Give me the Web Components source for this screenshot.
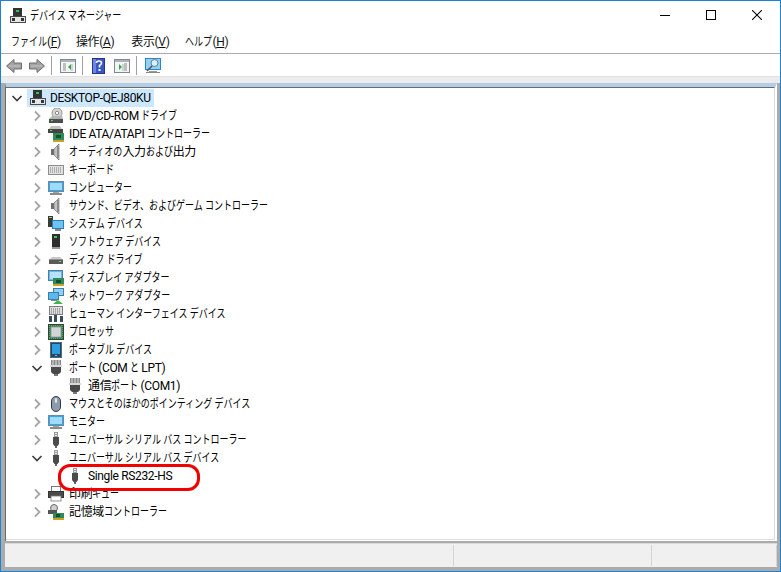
<!DOCTYPE html>
<html lang="ja">
<head>
<meta charset="utf-8">
<title>デバイス マネージャー</title>
<style>
  html, body { margin: 0; padding: 0; background: #fff; }
  body { font: 12px/16px Roboto, "Noto Sans CJK JP", sans-serif; letter-spacing: -0.35px; color: #000; }
</style>
</head>
<body>
<dm-window>
  <dm-titlebar slot="title"><dm-icon name="root"></dm-icon><jp-text>デバイス マネージャー</jp-text></dm-titlebar>
  <dm-menubar slot="menu">
    <dm-menu><jp-text>ファイル</jp-text>(<u>F</u>)</dm-menu>
    <dm-menu style="margin-left:15px">操作(<u>A</u>)</dm-menu>
    <dm-menu style="margin-left:17px">表示(<u>V</u>)</dm-menu>
    <dm-menu style="margin-left:16px"><jp-text>ヘルプ</jp-text>(<u>H</u>)</dm-menu>
  </dm-menubar>
  <dm-toolbar slot="toolbar"></dm-toolbar>
  <dm-tree slot="tree">
    <dm-item level="0" state="open" icon="root" selected>DESKTOP-QEJ80KU</dm-item>
    <dm-item level="1" state="closed" icon="dvd">DVD/CD-ROM ドライブ</dm-item>
    <dm-item level="1" state="closed" icon="ide">IDE ATA/ATAPI コントローラー</dm-item>
    <dm-item level="1" state="closed" icon="speaker">オーディオの入力および出力</dm-item>
    <dm-item level="1" state="closed" icon="keyboard">キーボード</dm-item>
    <dm-item level="1" state="closed" icon="monitor">コンピューター</dm-item>
    <dm-item level="1" state="closed" icon="speaker">サウンド、ビデオ、およびゲーム コントローラー</dm-item>
    <dm-item level="1" state="closed" icon="system">システム デバイス</dm-item>
    <dm-item level="1" state="closed" icon="software">ソフトウェア デバイス</dm-item>
    <dm-item level="1" state="closed" icon="disk">ディスク ドライブ</dm-item>
    <dm-item level="1" state="closed" icon="display">ディスプレイ アダプター</dm-item>
    <dm-item level="1" state="closed" icon="network">ネットワーク アダプター</dm-item>
    <dm-item level="1" state="closed" icon="hid">ヒューマン インターフェイス デバイス</dm-item>
    <dm-item level="1" state="closed" icon="cpu">プロセッサ</dm-item>
    <dm-item level="1" state="closed" icon="portable">ポータブル デバイス</dm-item>
    <dm-item level="1" state="open" icon="port">ポート (COM と LPT)</dm-item>
    <dm-item level="2" icon="port">通信ポート (COM1)</dm-item>
    <dm-item level="1" state="closed" icon="mouse">マウスとそのほかのポインティング デバイス</dm-item>
    <dm-item level="1" state="closed" icon="monitor">モニター</dm-item>
    <dm-item level="1" state="closed" icon="usb">ユニバーサル シリアル バス コントローラー</dm-item>
    <dm-item level="1" state="open" icon="usb">ユニバーサル シリアル バス デバイス</dm-item>
    <dm-item level="2" icon="usb">Single RS232-HS</dm-item>
    <dm-item level="1" state="closed" icon="printer">印刷キュー</dm-item>
    <dm-item level="1" state="closed" icon="storage">記憶域コントローラー</dm-item>
    <dm-callout></dm-callout>
  </dm-tree>
  <dm-statusbar slot="status"></dm-statusbar>
</dm-window>

<script>
const ICONS = {
  root: `<rect x="3" y="0" width="9" height="8" fill="#333"/><rect x="6" y="2" width="3" height="2" fill="#35c24a"/>
    <rect x="0.5" y="8.5" width="15" height="6" fill="#e6e6e6" stroke="#4a4a4a"/>
    <rect x="2" y="10" width="3" height="3" fill="#333"/><rect x="11" y="10" width="3" height="3" fill="#333"/>`,
  dvd: `<circle cx="9" cy="5" r="5" fill="#d4d4d4" stroke="#9a9a9a"/><circle cx="9" cy="5" r="1.7" fill="#fff" stroke="#888"/>
    <path d="M1 11 L4 8 H14 L15 11 Z" fill="#b5b5b5"/><rect x="1" y="11" width="14" height="4" fill="#4d4d4d"/><rect x="3" y="12" width="2" height="1" fill="#5be05b"/>`,
  ide: `<path d="M1 3 L3 0 H12 L14 3 Z" fill="#c4c4c4"/><rect x="0" y="3" width="15" height="4" fill="#444"/><rect x="2" y="4" width="2" height="1" fill="#6fe06f"/>
    <rect x="5" y="7" width="11" height="8" fill="#2f8a57"/><rect x="5" y="14" width="11" height="2" fill="#c9a227"/><rect x="8" y="9" width="5" height="3" fill="#174d30"/>`,
  speaker: `<rect x="3" y="5" width="3" height="6" fill="#6f6f6f"/><path d="M6 5 L11 0 V16 L6 11 Z" fill="#c4c4c4" stroke="#7a7a7a" stroke-width=".7"/><rect x="9" y="2" width="2" height="12" fill="#8c8c8c"/>`,
  keyboard: `<rect x="0.5" y="3.5" width="15" height="9" fill="#e2e2e2" stroke="#8c8c8c"/>
    <path d="M2 6h12M2 8h12M2 10h12" stroke="#7d7d7d" stroke-dasharray="1 1"/>`,
  monitor: `<rect x="0.5" y="1.5" width="15" height="10" fill="#36a5ea" stroke="#6e8aa0"/><rect x="2" y="3" width="12" height="7" fill="#9fdcfa"/>
    <rect x="5" y="12" width="6" height="1" fill="#a5a5a5"/><rect x="2" y="13" width="12" height="2" fill="#8c8c8c"/>`,
  system: `<rect x="0" y="0" width="5" height="11" fill="#3a3a3a"/><rect x="1" y="1" width="3" height="1" fill="#7fd67f"/>
    <rect x="4.5" y="4.5" width="11" height="8" fill="#6bc4f2" stroke="#2a7fb5"/><rect x="7" y="13" width="6" height="2" fill="#888"/>`,
  software: `<rect x="4" y="0" width="8" height="13" fill="#2f2f2f"/><rect x="6" y="2" width="3" height="2" fill="#48c45a"/>
    <rect x="4" y="13" width="8" height="2" fill="#9a9a9a"/>`,
  disk: `<path d="M2 7 L4 5 H12 L14 7 Z" fill="#c9c9c9"/><rect x="1" y="7" width="14" height="5" fill="#5b5b5b"/><rect x="1" y="7" width="14" height="1" fill="#8e8e8e"/><rect x="11" y="9" width="2" height="1" fill="#5be05b"/>`,
  display: `<rect x="0.5" y="0.5" width="14" height="10" fill="#63b8ec" stroke="#4f7d9c"/><rect x="2" y="2" width="11" height="7" fill="#b6e3fb"/>
    <rect x="5" y="8" width="11" height="7" fill="#2f8a57"/><rect x="8" y="10" width="5" height="3" fill="#174d30"/><rect x="5" y="14" width="11" height="2" fill="#c9a227"/>`,
  network: `<rect x="5.5" y="0.5" width="10" height="7" fill="#8fd2f7" stroke="#3b7ea8"/><rect x="0.5" y="4.5" width="10" height="7" fill="#5cb8ee" stroke="#3b7ea8"/>
    <rect x="3" y="12" width="6" height="1" fill="#888"/><path d="M5 16 L10 12 L15 16 Z" fill="#42b549"/>`,
  hid: `<rect x="1.5" y="0.5" width="13" height="8" fill="#dedede" stroke="#7d7d7d"/><path d="M3 3h10M3 5h10M3 7h10" stroke="#6e6e6e" stroke-dasharray="1 1"/>
    <path d="M1 16 V10 H4 V16Z M6 16 V9 H9 V16Z M12 16 V10 H15 V16Z" fill="#3d4a5c"/>`,
  cpu: `<rect x="0.5" y="0.5" width="15" height="15" fill="#2e6b47" stroke="#1f4d33"/><rect x="3" y="3" width="10" height="10" fill="#d4d4d4" stroke="#8aa"/>
    <path d="M1 1.5H15M1 14.5H15M1.5 1V15M14.5 1V15" stroke="#c9b36a" stroke-width=".6" stroke-dasharray="1 1"/>`,
  portable: `<rect x="2.5" y="0.5" width="11" height="15" fill="#27475f" stroke="#4e6a80"/><rect x="4" y="2" width="8" height="10" fill="#2c9de0"/><rect x="7" y="13" width="2" height="1" fill="#aaa"/>`,
  port: `<rect x="3" y="0" width="10" height="6" fill="#8a8a8a"/><path d="M5 0v5M8 0v5M11 0v5" stroke="#ddd"/>
    <rect x="2" y="5" width="12" height="2" fill="#d8d8d8"/><path d="M3 7 H13 V12 L11 14 H5 L3 12 Z" fill="#4a4a4a"/><rect x="6" y="14" width="4" height="2" fill="#777"/>`,
  mouse: `<rect x="3.5" y="0.5" width="9" height="15" rx="4.5" fill="#8d9cab" stroke="#2f3b47"/><rect x="7" y="2" width="2" height="5" rx="1" fill="#dfe6ec"/>`,
  usb: `<rect x="6" y="0" width="4" height="5" fill="#9a9a9a"/><rect x="7" y="1" width="2" height="1" fill="#eee"/><rect x="7" y="3" width="2" height="1" fill="#eee"/>
    <path d="M5 5 H11 V12 L9.5 14 H6.5 L5 12 Z" fill="#4b4b4b"/><rect x="7" y="14" width="2" height="2" fill="#666"/>`,
  printer: `<rect x="3.5" y="0.5" width="9" height="5" fill="#fff" stroke="#777"/><rect x="0.5" y="5.5" width="15" height="6" fill="#4a4a4a" stroke="#333"/><rect x="3" y="10" width="10" height="5" fill="#fff" stroke="#777" stroke-width=".8"/>`,
  storage: `<circle cx="6" cy="4" r="3.5" fill="#cfcfcf" stroke="#6c6c6c"/><rect x="0" y="6" width="9" height="4" fill="#555"/>
    <rect x="5" y="9" width="11" height="6" fill="#2f8a57"/><rect x="8" y="10" width="4" height="3" fill="#174d30"/><rect x="5" y="14" width="11" height="2" fill="#c9a227"/>`,
  back: `<path d="M8 1.5 L0.5 8 L8 14.5 V11 H15.5 V5 H8 Z" fill="#a2a2a2" stroke="#6f6f6f"/><path d="M3 8 H14" stroke="#c6c6c6"/>`,
  forward: `<path d="M8 1.5 L15.5 8 L8 14.5 V11 H0.5 V5 H8 Z" fill="#a2a2a2" stroke="#6f6f6f"/><path d="M2 8 H13" stroke="#c6c6c6"/>`,
  paneleft: `<rect x="0.5" y="1.5" width="15" height="13" fill="#f4f4f4" stroke="#7d8a94"/><rect x="1" y="2" width="14" height="2" fill="#a9b4bc"/>
    <path d="M3 6h3M3 8h3M3 10h3M3 12h3" stroke="#8a8a8a"/><path d="M11 6 L8 9 L11 12 Z" fill="#2aa84a"/><path d="M12 6v7" stroke="#a9b4bc"/>`,
  help: `<rect x="1.5" y="0.5" width="12" height="15" fill="#3a55c4" stroke="#27348f"/><rect x="2" y="1" width="3" height="14" fill="#6f86e0"/>
    <path d="M5.5 5 Q5.5 3 8 3 Q10.5 3 10.5 5 Q10.5 6.5 8.5 7.5 V9.5" fill="none" stroke="#fff" stroke-width="1.6"/><rect x="7.5" y="11" width="2" height="2" fill="#fff"/>`,
  paneright: `<rect x="0.5" y="1.5" width="15" height="13" fill="#f4f4f4" stroke="#7d8a94"/><rect x="1" y="2" width="14" height="2" fill="#a9b4bc"/>
    <path d="M10 6h3M10 8h3M10 10h3M10 12h3" stroke="#8a8a8a"/><path d="M5 6 L8 9 L5 12 Z" fill="#2aa84a"/><path d="M9 6v7" stroke="#a9b4bc"/>`,
  scan: `<rect x="0.5" y="0.5" width="15" height="11" fill="#8fd2f7" stroke="#2f86c0"/><rect x="4" y="13" width="8" height="1" fill="#999"/><rect x="1" y="14" width="14" height="1" fill="#888"/>
    <circle cx="9.5" cy="5" r="3.5" fill="#d8f0fc" stroke="#6a7f8c"/><path d="M7 8 L2 13" stroke="#556" stroke-width="1.6"/>`,
};

class DmIcon extends HTMLElement {
  connectedCallback() {
    if (this.shadowRoot) return;
    const size = this.getAttribute('size') || 16;
    this.attachShadow({ mode: 'open' }).innerHTML = `
      <style>:host { display: block; flex: none; width: ${size}px; height: ${size}px; } svg { display: block; }</style>
      <svg width="${size}" height="${size}" viewBox="0 0 16 16">${ICONS[this.getAttribute('name')] || ''}</svg>`;
  }
}

class DmWindow extends HTMLElement {
  connectedCallback() {
    this.attachShadow({ mode: 'open' }).innerHTML = `
      <style>
        :host { display: flex; flex-direction: column; box-sizing: border-box; width: 781px; height: 572px; border: 1px solid #1883d7; background: #fff; overflow: hidden; }
        .strip { flex: none; height: 7px; background: #ececec; border-top: 1px solid #e2e2e2; box-sizing: border-box; }
        .frame { flex: 1; min-height: 0; display: flex; flex-direction: column; background: #ababab; padding: 0 3px 4px 4px; }
      </style>
      <slot name="title"></slot>
      <slot name="menu"></slot>
      <slot name="toolbar"></slot>
      <div class="strip"></div>
      <div class="frame">
        <slot name="tree"></slot>
        <slot name="status"></slot>
      </div>`;
  }
}

class DmTitlebar extends HTMLElement {
  connectedCallback() {
    this.attachShadow({ mode: 'open' }).innerHTML = `
      <style>
        :host { display: flex; align-items: center; height: 29px; padding-left: 9px; gap: 4px; }
        .controls { margin-left: auto; display: flex; align-self: stretch; }
        .btn { width: 46px; display: flex; align-items: center; justify-content: center; padding-bottom: 1px; }
      </style>
      <slot></slot>
      <div class="controls">
        <div class="btn"><svg width="10" height="10"><path d="M0 5.5H10" stroke="#000"/></svg></div>
        <div class="btn"><svg width="10" height="10"><rect x=".5" y=".5" width="9" height="9" fill="none" stroke="#000"/></svg></div>
        <div class="btn"><svg width="10" height="10"><path d="M0 0L10 10M10 0L0 10" stroke="#000" stroke-width="1.05"/></svg></div>
      </div>`;
  }
}

class DmMenubar extends HTMLElement {
  connectedCallback() {
    this.attachShadow({ mode: 'open' }).innerHTML = `
      <style>:host { display: flex; align-items: center; box-sizing: border-box; height: 24px; padding-left: 10px; border-bottom: 1px solid #a9a9b8; }</style>
      <slot></slot>`;
  }
}

class DmMenu extends HTMLElement {
  connectedCallback() {
    this.attachShadow({ mode: 'open' }).innerHTML = `
      <style>:host { display: block; white-space: nowrap; color: #111; }</style>
      <slot></slot>`;
  }
}

class DmToolbar extends HTMLElement {
  connectedCallback() {
    this.attachShadow({ mode: 'open' }).innerHTML = `
      <style>
        :host { display: flex; align-items: center; box-sizing: border-box; height: 22px; padding: 1px 0 0 5px; }
        .sep { width: 1px; height: 19px; background: #a0a0a0; margin: 0 8px 0 6px; }
        dm-icon + dm-icon { margin-left: 7px; }
      </style>
      <dm-icon name="back"></dm-icon><dm-icon name="forward"></dm-icon>
      <div class="sep"></div>
      <dm-icon name="paneleft"></dm-icon>
      <div class="sep"></div>
      <dm-icon name="help"></dm-icon><dm-icon name="paneright"></dm-icon>
      <div class="sep"></div>
      <dm-icon name="scan"></dm-icon>`;
  }
}

class DmTree extends HTMLElement {
  connectedCallback() {
    this.attachShadow({ mode: 'open' }).innerHTML = `
      <style>
        :host { display: block; box-sizing: border-box; height: 458px; position: relative; background: #fff;
          border-top: 5px solid #b3cde6; border-left: 1px solid #6a6a6a; border-right: 2px solid #fff; }
        .pane { box-sizing: border-box; height: 100%; border-top: 1px solid #6a6a6a; margin-top: -1px; border-right: 1px solid #dcdcdc; border-bottom: 1px solid #dcdcdc; padding-top: 1px; overflow: hidden; }
      </style>
      <div class="pane"><slot></slot></div>`;
  }
}

class DmItem extends HTMLElement {
  connectedCallback() {
    const level = Number(this.getAttribute('level') || 1);
    const state = this.getAttribute('state');
    const label = this.textContent.trim();
    const pad = [3, 23, 42][level];
    const chevron = state === 'open'
      ? `<svg width="16" height="18"><path d="M3.5 7 L8 11.5 L12.5 7" fill="none" stroke="#404040" stroke-width="1.7"/></svg>`
      : state === 'closed'
        ? `<svg width="16" height="18"><path d="M6 4.5 L10.5 9 L6 13.5" fill="none" stroke="#a6a6a6" stroke-width="1.8"/></svg>`
        : '';
    this.attachShadow({ mode: 'open' }).innerHTML = `
      <style>
        :host { display: flex; height: 18px; padding-left: ${pad}px; white-space: nowrap; }
        .chev { flex: none; width: 16px; height: 18px; }
        .chev svg { display: block; }
        .cell { display: flex; align-items: center; gap: ${level === 0 ? 4 : 5}px; padding: 0 3px; margin-left: ${level === 0 ? 2 : 0}px; }
        .cell.selected { background: #cce8ff; }
      </style>
      <div class="chev">${chevron}</div>
      <div class="cell ${this.hasAttribute('selected') ? 'selected' : ''}">
        <dm-icon name="${this.getAttribute('icon')}"></dm-icon>
        <jp-text>${label}</jp-text>
      </div>`;
    this.replaceChildren();
  }
}

class DmCallout extends HTMLElement {
  connectedCallback() {
    this.attachShadow({ mode: 'open' }).innerHTML = `
      <style>:host { position: absolute; left: 52px; top: 376px; width: 142px; height: 27px; box-sizing: border-box; border: 3px solid #f00000; border-radius: 12px; }</style>`;
  }
}

class DmStatusbar extends HTMLElement {
  connectedCallback() {
    this.attachShadow({ mode: 'open' }).innerHTML = `
      <style>
        :host { display: flex; box-sizing: border-box; height: 24px; margin-top: 2px; padding: 1px 0; background: #f0f0f0; border-top: 1px solid #d8d8d8; }
        div { box-sizing: border-box; border-right: 1px solid #d4d4d4; }
      </style>
      <div style="width:449px"></div><div style="width:198px"></div><div style="width:125px"></div>`;
  }
}

/* kana are drawn about 3/4 wide in the UI font, so squeeze only those runs */
const KANA_SCALE = 0.75;

class JpText extends HTMLElement {
  connectedCallback() {
    const text = this.textContent;
    const root = this.attachShadow({ mode: 'open' });
    root.innerHTML = `<style>
        :host { display: inline-block; white-space: pre; }
        .k { display: inline-block; vertical-align: top; letter-spacing: 0; }
        .k span { display: inline-block; transform: scaleX(${KANA_SCALE}); transform-origin: 0 0; }
      </style>`;
    const parts = text.split(/([ぁ-んァ-ヶー、][ぁ-んァ-ヶー、 ]*)/).filter(Boolean);
    parts.forEach((part) => {
      if (/^[ぁ-んァ-ヶー、]/.test(part)) {
        const outer = document.createElement('span');
        outer.className = 'k';
        const inner = document.createElement('span');
        inner.textContent = part;
        outer.append(inner);
        root.append(outer);
      } else {
        root.append(part);
      }
    });
    this.replaceChildren();
    root.querySelectorAll('.k').forEach((outer) => {
      outer.style.width = `${outer.firstChild.getBoundingClientRect().width}px`;
    });
  }
}

customElements.define('dm-icon', DmIcon);
customElements.define('dm-window', DmWindow);
customElements.define('dm-titlebar', DmTitlebar);
customElements.define('dm-menubar', DmMenubar);
customElements.define('dm-menu', DmMenu);
customElements.define('dm-toolbar', DmToolbar);
customElements.define('dm-tree', DmTree);
customElements.define('dm-item', DmItem);
customElements.define('dm-callout', DmCallout);
customElements.define('dm-statusbar', DmStatusbar);
customElements.define('jp-text', JpText);
</script>
</body>
</html>
